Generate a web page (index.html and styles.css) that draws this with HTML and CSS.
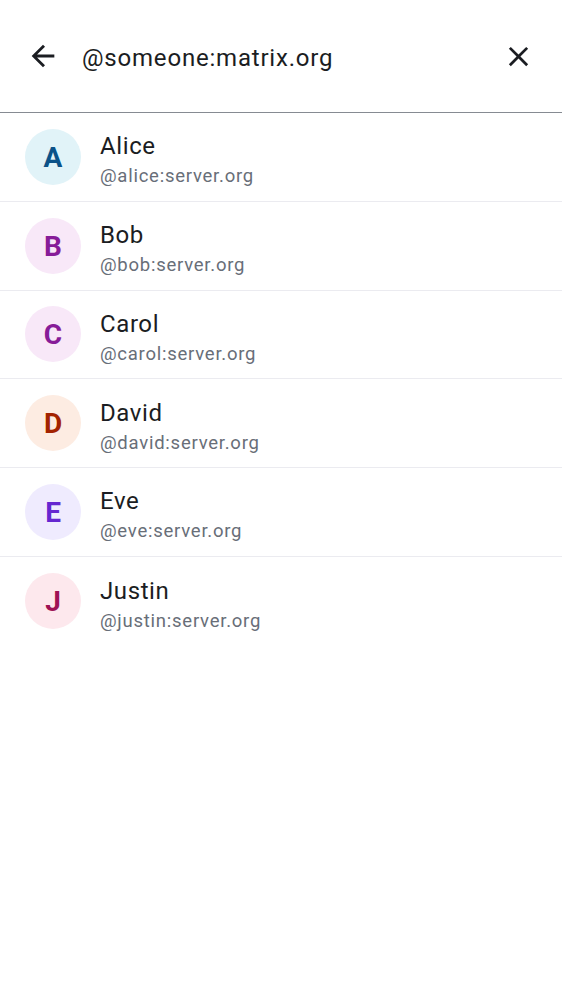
FILE: index.html
```html
<!DOCTYPE html>
<html>
<head>
<meta charset="utf-8">
<link rel="stylesheet" href="styles.css">
</head>
<body>
<div class="screen">
  <header class="search-bar">
    <button class="icon-btn back" aria-label="Back">
      <svg width="34" height="34" viewBox="0 0 24 24"><path d="M20 11H7.83l5.59-5.59L12 4l-8 8 8 8 1.41-1.41L7.83 13H20v-2z" fill="#1b1d22"/></svg>
    </button>
    <div class="query">@someone:matrix.org</div>
    <button class="icon-btn close" aria-label="Clear">
      <svg width="33" height="33" viewBox="0 0 24 24"><path d="M19 6.41L17.59 5 12 10.59 6.41 5 5 6.41 10.59 12 5 17.59 6.41 19 12 13.41 17.59 19 19 17.59 13.41 12z" fill="#1b1d22"/></svg>
    </button>
  </header>
  <ul class="results">
    <li class="row">
      <div class="avatar av-a">A</div>
      <div class="info"><div class="name">Alice</div><div class="mxid">@alice:server.org</div></div>
    </li>
    <li class="row">
      <div class="avatar av-b">B</div>
      <div class="info"><div class="name">Bob</div><div class="mxid">@bob:server.org</div></div>
    </li>
    <li class="row">
      <div class="avatar av-b">C</div>
      <div class="info"><div class="name">Carol</div><div class="mxid">@carol:server.org</div></div>
    </li>
    <li class="row">
      <div class="avatar av-d">D</div>
      <div class="info"><div class="name">David</div><div class="mxid">@david:server.org</div></div>
    </li>
    <li class="row">
      <div class="avatar av-e">E</div>
      <div class="info"><div class="name">Eve</div><div class="mxid">@eve:server.org</div></div>
    </li>
    <li class="row last">
      <div class="avatar av-j">J</div>
      <div class="info"><div class="name">Justin</div><div class="mxid">@justin:server.org</div></div>
    </li>
  </ul>
</div>
</body>
</html>
```

FILE: styles.css
```css
* { box-sizing: border-box; }
html, body {
  margin: 0;
  padding: 0;
  background: #ffffff;
  font-family: Roboto, "Noto Sans", "Liberation Sans", sans-serif;
  color: #1b1d22;
}
.screen {
  width: 562px;
  min-height: 1000px;
}
.search-bar {
  height: 113px;
  display: flex;
  align-items: center;
  border-bottom: 1px solid #868b92;
  padding: 0 27px 0 26px;
}
.icon-btn {
  background: none;
  border: none;
  padding: 0;
  display: flex;
  align-items: center;
  justify-content: center;
  width: 34px;
  height: 34px;
}
.query {
  flex: 1;
  margin-left: 22px;
  padding-top: 4px;
  font-size: 24px;
  letter-spacing: 0.8px;
  line-height: 32px;
  color: #1b1d22;
}
.results {
  list-style: none;
  margin: 0;
  padding: 0;
}
.row {
  height: 88.75px;
  display: flex;
  align-items: center;
  padding-left: 25px;
  border-bottom: 1px solid #ebebf0;
}
.row.last { border-bottom: none; }
.avatar {
  width: 56px;
  height: 56px;
  border-radius: 50%;
  display: flex;
  align-items: center;
  justify-content: center;
  font-weight: 700;
  font-size: 28px;
  padding-top: 1px;
  flex-shrink: 0;
}
.av-a { background: #e1f3f8; color: #0b5288; }
.av-b { background: #f8e8f8; color: #871c98; }
.av-d { background: #fdece2; color: #a32300; }
.av-e { background: #efebfe; color: #6527d0; }
.av-j { background: #fde8ed; color: #9f1254; }
.info {
  margin-left: 19px;
  padding-top: 5px;
  display: flex;
  flex-direction: column;
  gap: 2px;
}
.name {
  font-size: 24px;
  line-height: 32px;
  letter-spacing: 0.6px;
  color: #1b1d22;
}
.mxid {
  font-size: 18.5px;
  line-height: 24px;
  letter-spacing: 0.75px;
  color: #686e78;
}
```
